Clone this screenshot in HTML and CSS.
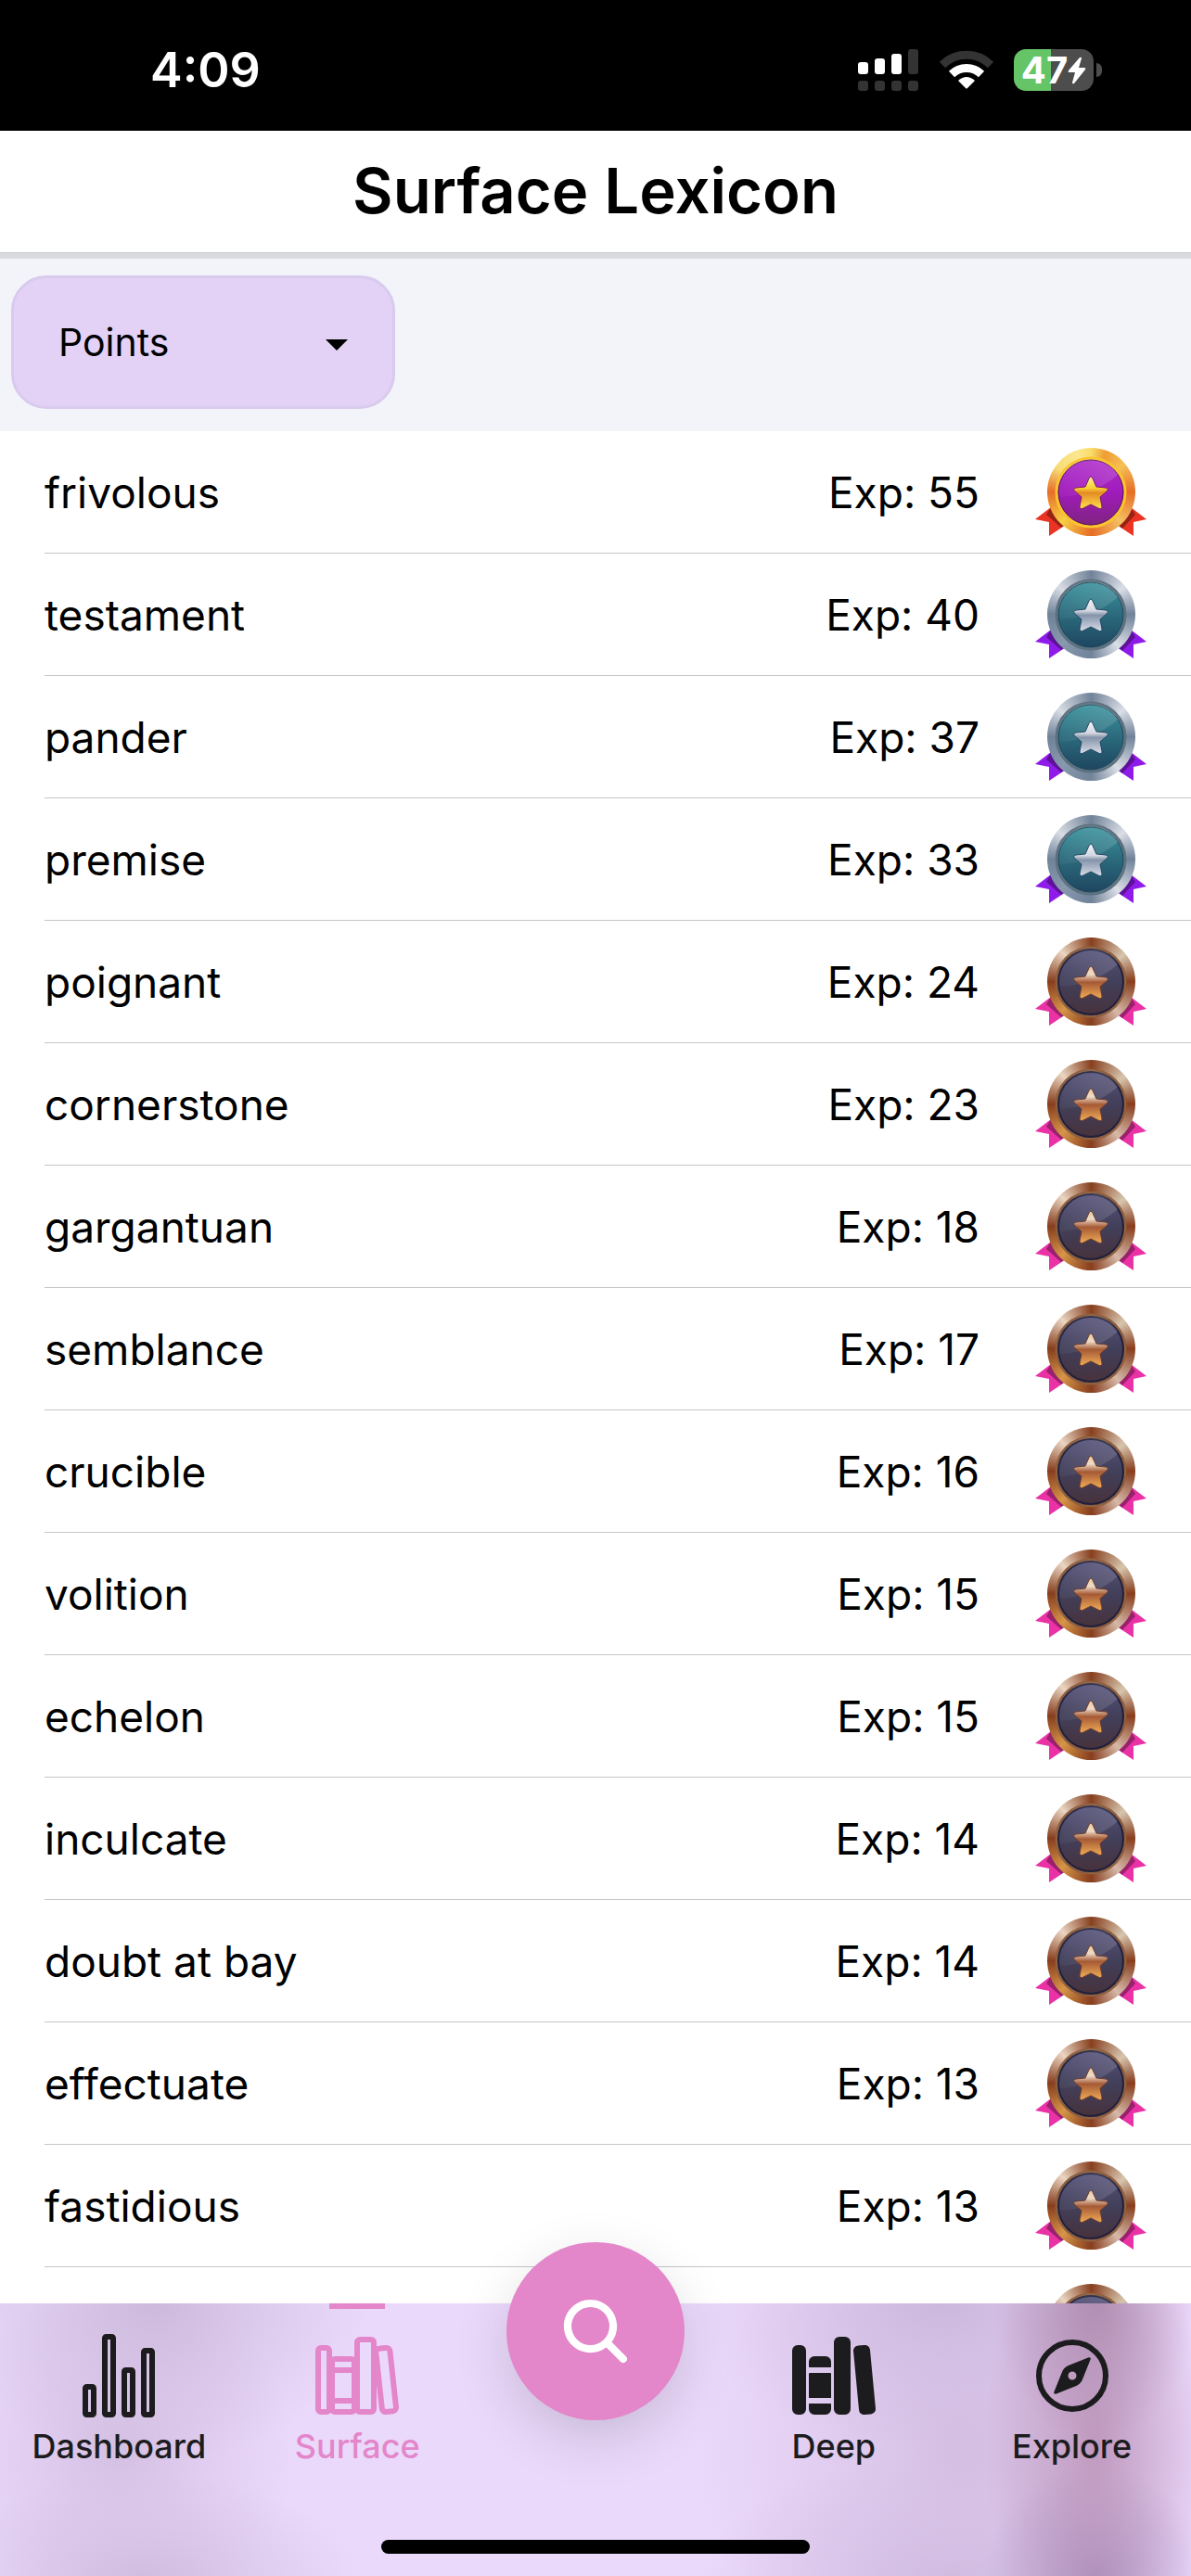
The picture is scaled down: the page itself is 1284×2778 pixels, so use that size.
FILE: index.html
```html
<!DOCTYPE html>
<html lang="en">
<head>
  <meta charset="UTF-8" />
  <meta name="viewport" content="width=device-width, initial-scale=1.0" />
  <title>Surface Lexicon</title>
  <link rel="stylesheet" href="styles.css">
</head>
<body>

  <div class="status-bar">
    <span class="time">4:09</span>
    <div class="status-icons">
      <svg width="66" height="46" viewBox="0 0 66 46">
        <g fill="#fff">
          <rect x="0" y="14" width="11" height="13" rx="3" />
          <rect x="18" y="10" width="11" height="17" rx="3" />
          <rect x="36" y="5" width="11" height="22" rx="3" />
        </g>
        <g fill="#333">
          <rect x="54" y="0" width="11" height="27" rx="3" />
          <rect x="0" y="34" width="11" height="11" rx="3" />
          <rect x="18" y="34" width="11" height="11" rx="3" />
          <rect x="36" y="34" width="11" height="11" rx="3" />
          <rect x="54" y="34" width="11" height="11" rx="3" />
        </g>
      </svg>
      <svg class="wifi" width="58" height="46" viewBox="0 0 58 46">
        <path d="M3 17a37 37 0 0 1 52 0" fill="none" stroke="#333" stroke-width="9" />
        <path d="M13 27a23 23 0 0 1 32 0" fill="none" stroke="#fff" stroke-width="9" />
        <path d="M20 34q9-8 18 0l-8 8q-1 1-2 0z" fill="#fff" />
      </svg>
      <div class="battery">
        <div class="battery-body">
          <span>47</span>
          <svg width="20" height="30" viewBox="0 0 20 30">
            <path d="M13 1L1 15q-1 2 1 2h6L5 28q0 2 2 1L19 14q1-2-1-2h-6l3-10q0-2-2-1z" fill="#fff" />
          </svg>
        </div>
        <div class="battery-cap"></div>
      </div>
    </div>
  </div>

  <header class="header">
    <h1>Surface Lexicon</h1>
  </header>

  <div class="filter">
    <div class="select-box">
      <select id="sort" aria-label="Sort by">
        <option>Points</option>
      </select>
      <svg class="caret" width="24" height="12" viewBox="0 0 24 12"><path d="M0 0h24L12 12z" /></svg>
    </div>
  </div>

  <ul class="word-list" id="word-list"></ul>

  <nav class="tab-bar">
    <div class="tabs">
      <a href="#dashboard" class="tab">
        <svg class="outline" viewBox="0 0 512 512">
          <rect x="64" y="320" width="48" height="160" rx="8" />
          <rect x="288" y="224" width="48" height="256" rx="8" />
          <rect x="400" y="112" width="48" height="368" rx="8" />
          <rect x="176" y="32" width="48" height="448" rx="8" />
        </svg>
        <span>Dashboard</span>
      </a>
      <a href="#surface" class="tab active">
        <svg class="outline" viewBox="0 0 512 512">
          <rect x="32" y="96" width="64" height="368" rx="16" />
          <path d="M112 224h128M112 400h128" />
          <rect x="112" y="160" width="128" height="304" rx="16" />
          <rect x="256" y="48" width="96" height="416" rx="16" />
          <path d="M422.46 96.11l-40.4 4.25c-11.12 1.17-19.18 11.57-17.93 23.1l34.92 321.59c1.26 11.53 11.37 20 22.49 18.84l40.4-4.25c11.12-1.17 19.18-11.57 17.93-23.1L445 115c-1.31-11.58-11.42-20.06-22.54-18.89z" />
        </svg>
        <span>Surface</span>
      </a>
      <button class="search-btn" aria-label="Search">
        <svg width="84" height="84" viewBox="0 0 512 512">
          <path d="M456.69 421.39L362.6 327.3a173.81 173.81 0 0034.84-104.58C397.44 126.38 319.06 48 222.72 48S48 126.38 48 222.72s78.38 174.72 174.72 174.72A173.81 173.81 0 00327.3 362.6l94.09 94.09a25 25 0 0035.3-35.3zM97.92 222.72a124.8 124.8 0 11124.8 124.8 124.95 124.95 0 01-124.8-124.8z" fill="#fff" />
        </svg>
      </button>
      <a href="#deep" class="tab">
        <svg class="solid" viewBox="0 0 512 512">
          <path d="M64 480H48a32 32 0 01-32-32V112a32 32 0 0132-32h16a32 32 0 0132 32v336a32 32 0 01-32 32zM240 176a32 32 0 00-32-32h-64a32 32 0 00-32 32v28a4 4 0 004 4h120a4 4 0 004-4zM112 448a32 32 0 0032 32h64a32 32 0 0032-32v-30a2 2 0 00-2-2H114a2 2 0 00-2 2z" />
          <rect x="112" y="240" width="128" height="144" rx="2" />
          <path d="M320 480h-32a32 32 0 01-32-32V64a32 32 0 0132-32h32a32 32 0 0132 32v384a32 32 0 01-32 32zM495.89 445.45l-32.23-340c-1.48-15.65-16.94-27-34.53-25.31l-31.85 3c-17.59 1.67-30.65 15.71-29.17 31.36l32.23 340c1.48 15.65 16.94 27 34.53 25.31l31.85-3c17.59-1.67 30.65-15.71 29.17-31.36z" />
        </svg>
        <span>Deep</span>
      </a>
      <a href="#explore" class="tab">
        <svg class="solid" viewBox="0 0 512 512">
          <circle cx="256" cy="256" r="192" fill="none" stroke="currentColor" stroke-width="32" />
          <path d="M350.67 150.93l-117.2 46.88a64 64 0 00-35.66 35.66l-46.88 117.2a8 8 0 0010.4 10.4l117.2-46.88a64 64 0 0035.66-35.66l46.88-117.2a8 8 0 00-10.4-10.4zM256 280a24 24 0 1124-24 24 24 0 01-24 24z" />
        </svg>
        <span>Explore</span>
      </a>
    </div>
    <div class="home-indicator"></div>
  </nav>

  <!-- shared gradients for the medals -->
  <svg class="defs" width="0" height="0" aria-hidden="true">
    <defs>
      <linearGradient id="disc-gold" x2="0" y2="1">
        <stop offset="0" stop-color="#b030cc" /><stop offset=".5" stop-color="#a01bbb" /><stop offset="1" stop-color="#7f2380" />
      </linearGradient>
      <linearGradient id="disc-silver" x2="0" y2="1">
        <stop offset="0" stop-color="#3a929d" /><stop offset=".5" stop-color="#2b6a7c" /><stop offset="1" stop-color="#1e4660" />
      </linearGradient>
      <linearGradient id="disc-bronze" x2="0" y2="1">
        <stop offset="0" stop-color="#55527a" /><stop offset=".5" stop-color="#423f5a" /><stop offset="1" stop-color="#47323c" />
      </linearGradient>
      <linearGradient id="star-gold" x2="0" y2="1">
        <stop offset="0" stop-color="#fff3a0" /><stop offset=".36" stop-color="#f8d232" /><stop offset=".5" stop-color="#e58a25" /><stop offset="1" stop-color="#fde34a" />
      </linearGradient>
      <linearGradient id="star-silver" x2="0" y2="1">
        <stop offset="0" stop-color="#f2f3f8" /><stop offset=".36" stop-color="#d5d8e2" /><stop offset=".5" stop-color="#8594aa" /><stop offset="1" stop-color="#d8dce8" />
      </linearGradient>
      <linearGradient id="star-bronze" x2="0" y2="1">
        <stop offset="0" stop-color="#eccb9c" /><stop offset=".25" stop-color="#eedbc8" /><stop offset=".5" stop-color="#a55a35" /><stop offset="1" stop-color="#f0ab56" />
      </linearGradient>
      <linearGradient id="gloss" x1="0" x2="1" y2="0">
        <stop offset="0" stop-color="#fff" stop-opacity=".03" /><stop offset="1" stop-color="#fff" stop-opacity=".14" />
      </linearGradient>
    </defs>
  </svg>

  <script src="script.js"></script>
</body>
</html>
```
FILE: script.js
```js
const words = [
  { word: 'frivolous', exp: 55 },
  { word: 'testament', exp: 40 },
  { word: 'pander', exp: 37 },
  { word: 'premise', exp: 33 },
  { word: 'poignant', exp: 24 },
  { word: 'cornerstone', exp: 23 },
  { word: 'gargantuan', exp: 18 },
  { word: 'semblance', exp: 17 },
  { word: 'crucible', exp: 16 },
  { word: 'volition', exp: 15 },
  { word: 'echelon', exp: 15 },
  { word: 'inculcate', exp: 14 },
  { word: 'doubt at bay', exp: 14 },
  { word: 'effectuate', exp: 13 },
  { word: 'fastidious', exp: 13 },
  { word: '', exp: null }
];

function medalType(exp) {
  if (exp >= 50) return 'gold';
  if (exp >= 30) return 'silver';
  return 'bronze';
}

function medal(type) {
  return `
    <div class="medal ${type}">
      <svg viewBox="0 0 120 96">
        <path class="ribbon" d="M17 64L0 77l15 3v15l18-12zM103 64l17 13-14 3v15L88 83z" />
        <path class="fold" d="M17 64l-5 8 16 14 6-4zM103 64l5 8-14 15-6-5z" />
      </svg>
      <div class="ring"></div>
      <svg viewBox="0 0 120 96">
        <circle class="rim" cx="60" cy="48" r="37" />
        <circle class="disc" cx="60" cy="48" r="35" fill="url(#disc-${type})" />
        <path d="M26 53A34 34 0 0 1 89 29Q64 51 26 53z" fill="url(#gloss)" />
        <path class="star" fill="url(#star-${type})" d="M58 33q2-4 4 0l4 9 10 1q4 1 1 4l-7 6 2 10q0 4-4 2l-8-4-8 4q-4 2-4-2l2-10-7-6q-3-3 1-4l10-1z" />
      </svg>
    </div>`;
}

document.getElementById('word-list').innerHTML = words.map(item => `
  <li class="word-row">
    <span class="word">${item.word}</span>
    <span class="exp">${item.exp ? 'Exp: ' + item.exp : ''}</span>
    ${medal(medalType(item.exp))}
  </li>`).join('');
```
FILE: styles.css
```css
* {
  box-sizing: border-box;
}

body {
  margin: 0;
  height: 100vh;
  display: flex;
  flex-direction: column;
  overflow: hidden;
  background-color: #fff;
  color: #000;
  font-family: Inter, "Liberation Sans", sans-serif;
}

.defs {
  position: absolute;
}

/* status bar */
.status-bar {
  flex: none;
  height: 141px;
  padding: 10px 96px 0 162px;
  display: flex;
  align-items: center;
  justify-content: space-between;
  background-color: #000;
  color: #fff;
}

.time {
  font-size: 52px;
  font-weight: 600;
}

.status-icons {
  display: flex;
  align-items: center;
  gap: 22px;
}

.status-icons svg {
  display: block;
}

.battery {
  display: flex;
  align-items: center;
  gap: 3px;
}

.battery-body {
  width: 86px;
  height: 45px;
  border-radius: 13px;
  display: flex;
  align-items: center;
  justify-content: center;
  background: linear-gradient(to right, #65c466 47%, #4d4d4d 47%);
  font-size: 40px;
  font-weight: 700;
  line-height: 45px;
}

.battery-cap {
  width: 6px;
  height: 15px;
  border-radius: 0 8px 8px 0;
  background-color: #4d4d4d;
}

/* title */
.header {
  flex: none;
  height: 138px;
  padding-bottom: 4px;
  display: flex;
  align-items: center;
  justify-content: center;
  border-bottom: 6px solid #dadbdf;
  box-shadow: inset 0 -1px #c9ccc9;
}

.header h1 {
  margin: 0;
  font-size: 67px;
  font-weight: 600;
}

/* sort drop-down */
.filter {
  flex: none;
  padding: 18px 12px 24px;
  background-color: #f3f4f9;
}

.select-box {
  position: relative;
  width: 414px;
  height: 144px;
}

.select-box select {
  width: 100%;
  height: 100%;
  padding: 0 48px;
  appearance: none;
  border: 3px solid #d8cbed;
  border-radius: 38px;
  background-color: #e3d2f5;
  color: #000;
  font-family: inherit;
  font-size: 41px;
}

.caret {
  position: absolute;
  top: 69px;
  right: 51px;
  pointer-events: none;
}

/* list */
.word-list {
  flex: 1;
  min-height: 0;
  margin: 0;
  padding: 0;
  list-style: none;
  overflow: hidden;
}

.word-row {
  height: 132px;
  margin-left: 48px;
  padding-right: 48px;
  display: flex;
  align-items: center;
  gap: 60px;
  border-bottom: 1px solid #c6c6c8;
  font-size: 46px;
}

.word {
  flex: 1;
}

.medal {
  width: 120px;
  height: 96px;
  display: grid;
  place-items: center;
}

.medal > * {
  grid-area: 1 / 1;
}

.medal svg {
  width: 120px;
  height: 96px;
}

.ring {
  width: 95px;
  height: 95px;
  border-radius: 50%;
}

.fold {
  opacity: 0.35;
}

.rim {
  fill: none;
  stroke-width: 3;
}

.disc {
  stroke-width: 1;
}

.star {
  stroke-width: 1;
}

.gold .ring {
  background: conic-gradient(#f9dc6a, #ef9c33 20deg, #f5c057 50deg, #e66e28 90deg, #f5c062 135deg, #e66e28 180deg, #f8cf45 225deg, #e66e28 270deg, #f7dc78 305deg, #fbe78e 340deg, #f9dc6a);
}

.gold .ribbon { fill: #ea3323; }
.gold .rim { stroke: #fbc42d; }
.gold .disc { stroke: #571066; }
.gold .star { stroke: #7a1f66; }

.silver .ring {
  background: conic-gradient(#718399, #dadee6 50deg, #718399 90deg, #dbdfe7 140deg, #718399 180deg, #8899ae 225deg, #718399 270deg, #d8dce4 310deg, #718399);
}

.silver .ribbon { fill: #8f1bea; }
.silver .rim { stroke: #5d7280; }
.silver .disc { stroke: #1c4355; }
.silver .star { stroke: #234a63; }

.bronze .ring {
  background: conic-gradient(#87401f, #d7c5ae 50deg, #873e1e 90deg, #d6b9a8 140deg, #873e1e 180deg, #d79548 225deg, #873e1e 270deg, #ead5c2 315deg, #87401f);
}

.bronze .ribbon { fill: #ea32a6; }
.bronze .rim { stroke: #8e6040; }
.bronze .disc { stroke: #20203c; stroke-width: 2; }
.bronze .star { stroke: #6b3d30; }

.tab-bar {
  position: relative;
  flex: none;
  height: 294px;
  display: flex;
  flex-direction: column;
  justify-content: space-between;
  align-items: center;
  padding-bottom: 24px;
  background:
    radial-gradient(110px 150px at 92% 0, #a57fa4bb, #a57fa455 50%, #a57fa400),
    radial-gradient(120px 250px at 92% 52%, #b07fa6aa, #b07fa655 50%, #b07fa600),
    radial-gradient(120px 120px at 92% 100%, #a288b8bb, #a288b855 50%, #a288b800),
    radial-gradient(270px 160px at 79% 0, #cdb8dd, #cdb8dd77 50%, #cdb8dd00),
    radial-gradient(290px 260px at 81% 55%, #d4bfe3, #d4bfe377 50%, #d4bfe300),
    radial-gradient(270px 130px at 80% 100%, #cfbadf, #cfbadf77 50%, #cfbadf00),
    radial-gradient(230px 170px at 13% 0, #ccb9dc, #ccb9dc77 50%, #ccb9dc00),
    radial-gradient(190px 180px at 10% 55%, #d4c0e2, #d4c0e277 50%, #d4c0e200),
    radial-gradient(230px 110px at 12% 100%, #cfbcdf, #cfbcdf77 50%, #cfbcdf00),
    #ebd9fb;
}

.tabs {
  width: 100%;
  display: grid;
  grid-template-columns: repeat(5, 1fr);
  justify-items: center;
}

.tab {
  position: relative;
  padding-top: 30px;
  display: flex;
  flex-direction: column;
  align-items: center;
  gap: 6px;
  color: #1c1c1e;
  font-size: 36px;
  font-weight: 500;
  line-height: 44px;
  text-decoration: none;
}

.tab svg {
  width: 96px;
  height: 96px;
}

.outline {
  fill: none;
  stroke: currentColor;
  stroke-width: 32;
  stroke-linejoin: round;
}

.solid {
  fill: currentColor;
}

.tab.active {
  color: #e386ca;
}

.tab.active::before {
  content: "";
  position: absolute;
  top: 0;
  width: 60px;
  height: 6px;
  background-color: #e386ca;
}

.search-btn {
  width: 192px;
  height: 192px;
  margin-top: -66px;
  padding: 0;
  display: grid;
  place-items: center;
  border: none;
  border-radius: 50%;
  background-color: #e386ca;
  box-shadow: 0 20px 60px rgba(0, 0, 0, 0.14);
}

.home-indicator {
  width: 36%;
  height: 15px;
  border-radius: 8px;
  background-color: #000;
}
```
